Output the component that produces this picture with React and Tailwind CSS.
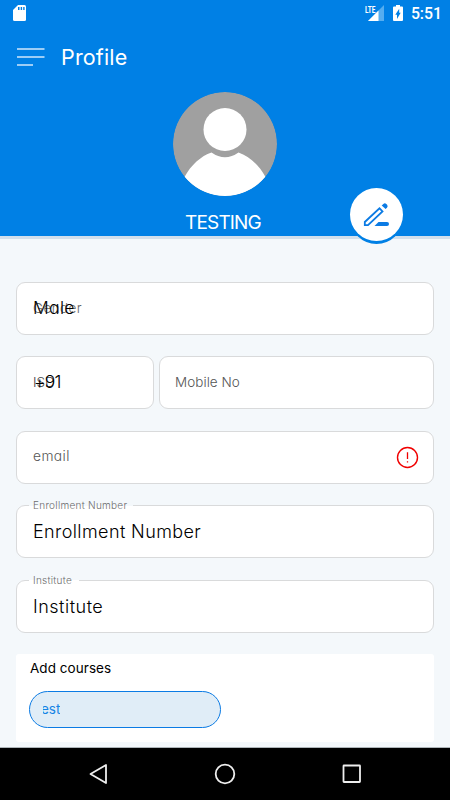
import React from "react";

function StatusBar() {
  return (
    <div className="flex h-7 items-center pr-2 pl-[13px] text-white">
      <svg className="-mt-[2px] h-4 w-[13px]" viewBox="0 0 13 16">
        <path fill="currentColor" d="M5 0h6.500Q13 0 13 1.500v13q0 1.500-1.500 1.500h-10Q0 16 0 14.500V5z" />
        <path fill="#0080e5" d="M5 2h1.500v3H5zM7.700 2h1.400v3H7.700zM10.200 2h1.400v3h-1.400z" />
      </svg>
      <svg className="-mt-[2px] ml-auto h-4 w-5" viewBox="0 0 20 16">
        <path fill="#55adf0" d="M19 0v16H3z" />
        <path fill="currentColor" d="M13.500 5.500V16H3z" />
        <path fill="#0080e5" d="M0 0h11v8H0z" />
        <text x="0" y="7.500" fill="currentColor" fontFamily="Roboto" fontWeight="700" fontSize="9.500" textLength="10.500" lengthAdjust="spacingAndGlyphs">LTE</text>
      </svg>
      <svg className="-mt-[2px] ml-2 h-4 w-[10px]" viewBox="0 0 10 16">
        <path fill="currentColor" d="M3 0h4v1.500h2q1 0 1 1V15q0 1-1 1H1q-1 0-1-1V2.500q0-1 1-1h2z" />
        <path fill="#0080e5" d="M6.200 3.800v4h1.500L4 14V9.700H2.300z" />
      </svg>
      <span className="ml-2 font-[Roboto,sans-serif] text-[15.800px] leading-none font-medium">5:51</span>
    </div>
  );
}

function Avatar() {
  return (
    <svg className="size-[104px] rounded-full" viewBox="0 0 104 104">
      <circle cx="52" cy="52" r="52" fill="#a0a0a0" />
      <path fill="#fff" d="M11.500 85C18 73 28 64 38.500 60.500Q52 70 65.500 60.500C76 64 86 73 92.500 85A52 52 0 0 1 11.500 85z" />
      <circle cx="52" cy="37.500" r="21.500" fill="#fff" />
    </svg>
  );
}

function Field({ children, className = "" }) {
  return (
    <div className={"relative flex h-[53px] items-center rounded-[9px] border border-[#d9dadb] bg-white px-4 " + className}>
      {children}
    </div>
  );
}

function FloatingLabel({ children, className = "" }) {
  return (
    <span className={"absolute -top-[8px] left-[12px] h-[15px] rounded-sm bg-gradient-to-b from-[#f4f8fb] from-50% to-white to-50% pl-1 text-[10px] leading-[15px] tracking-[0.27px] whitespace-nowrap text-[#6c6c6c] " + className}>
      {children}
    </span>
  );
}

export default function App() {
  return (
    <div className="flex h-[800px] w-[450px] flex-col overflow-hidden bg-[#f4f8fb] font-[Inter,sans-serif] font-light text-black [font-feature-settings:'cv11']">
      <header className="relative h-[236px] shrink-0 bg-[#0080e5] text-white shadow-[0_3px_0_#d2dfec]">
        <StatusBar />
        <div className="flex h-[58px] items-center pl-[17px]">
          <svg className="h-[18px] w-[28px]" viewBox="0 0 28 18" stroke="#cfe6fb" strokeWidth="1.500">
            <path d="M0 1h27.500M0 9h27.500M0 17h16" />
          </svg>
          <h1 className="mt-[2px] ml-4 text-[21.500px] leading-none font-normal tracking-[0.15px]">Profile</h1>
        </div>
        <div className="mt-[6px] flex flex-col items-center">
          <Avatar />
          <p className="mt-4 -ml-[4px] text-[19px] leading-[22px] font-normal tracking-[-0.850px]">TESTING</p>
        </div>
        <button className="absolute top-[188px] left-[350px] flex size-[53px] items-center justify-center rounded-full bg-white shadow-[0_3px_0_#0080e5]">
          <svg className="size-[27px]" viewBox="0 0 27 27" fill="none">
            <path d="M1.800 24.200v-3.200L16.500 7.300l3 3.100L5 24.200z" stroke="#0b7be4" strokeWidth="1.800" />
            <path d="m18.700 4.600 1.700-1.700q1.500-1.300 2.900 0l.8.900q1.200 1.400 0 2.700L22.600 8z" fill="#0b7be4" />
            <path d="M11.500 24.900 15.500 20.900H24q2 0 2 2t-2 2z" fill="#0b7be4" />
          </svg>
        </button>
      </header>

      <main className="flex h-[511px] shrink-0 flex-col px-4 pt-[46px]">
        <Field className="w-[418px]">
          <span className="text-[13.500px] tracking-[0.4px] text-[#666]">Gender</span>
          <span className="absolute left-4 text-[17.500px] tracking-[0.3px]">Male</span>
        </Field>
        <div className="mt-[21px] flex gap-[5px]">
          <Field className="w-[138px]">
            <span className="text-[13.500px] text-[#444]">ISD</span>
            <span className="absolute left-[17px] text-[17.500px] tracking-[-0.7px]">+91</span>
          </Field>
          <Field className="w-[275px]">
            <span className="-mt-px -ml-px text-[13.500px] tracking-[0.05px] text-[#555]">Mobile No</span>
          </Field>
        </div>
        <Field className="mt-[22px] w-[418px] justify-between">
          <span className="-mt-[2px] text-[13.800px] tracking-[0.4px] text-[#555]">email</span>
          <svg className="-mr-[2px] size-[23px]" viewBox="0 0 23 23" fill="none" stroke="#f00000">
            <circle cx="11.500" cy="11.500" r="10" strokeWidth="1.400" />
            <path d="M11.500 6.300v6.600M11.500 15.200v1.400" strokeWidth="1.300" />
          </svg>
        </Field>
        <Field className="mt-[21px] w-[418px]">
          <FloatingLabel className="w-[104px]">Enrollment Number</FloatingLabel>
          <span className="text-[18px] tracking-[0.4px]">Enrollment Number</span>
        </Field>
        <Field className="mt-[22px] w-[418px]">
          <FloatingLabel className="w-[50px]">Institute</FloatingLabel>
          <span className="text-[18px] tracking-[0.5px]">Institute</span>
        </Field>
        <section className="mt-[21px] h-[88px] w-[418px] rounded-[3px] bg-white pt-1 pl-[13px]">
          <h2 className="ml-px text-[13.500px] leading-5 font-normal tracking-[0.05px]">Add courses</h2>
          <div className="mt-[13px] flex h-[37px] w-[192px] items-center rounded-full border border-[#0b7be4] bg-[#e0edf7] pl-[13px]">
            <span className="flex overflow-hidden text-[13.500px] font-normal text-[#1684e5]">
              <span className="-ml-[2px]">est</span>
            </span>
          </div>
        </section>
      </main>

      <nav className="h-[53px] shrink-0 border-t border-[#aeb5b9] bg-black">
        <svg className="h-[52px] w-[450px]" viewBox="0 0 450 52" fill="none" stroke="#eee" strokeWidth="1.800">
          <path d="M106 17v18L90.500 26z" strokeLinejoin="round" />
          <circle cx="225" cy="26" r="9.300" />
          <rect x="343.500" y="17.500" width="16.500" height="16.500" rx="0.500" />
        </svg>
      </nav>
    </div>
  );
}
